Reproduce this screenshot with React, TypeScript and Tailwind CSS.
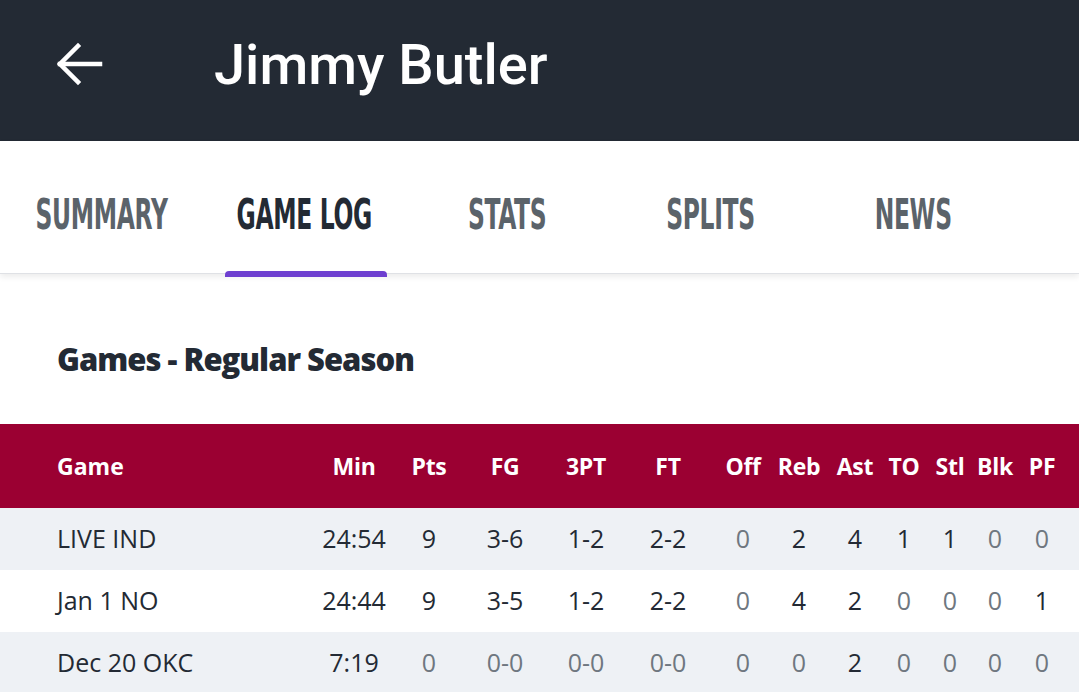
import React from 'react';

const tabs = ['SUMMARY', 'GAME LOG', 'STATS', 'SPLITS', 'NEWS'];
const cols = ['Min', 'Pts', 'FG', '3PT', 'FT', 'Off', 'Reb', 'Ast', 'TO', 'Stl', 'Blk', 'PF'];

const rows = [
  { game: 'LIVE IND', stats: ['24:54', '9', '3-6', '1-2', '2-2', '0', '2', '4', '1', '1', '0', '0'] },
  { game: 'Jan 1 NO', stats: ['24:44', '9', '3-5', '1-2', '2-2', '0', '4', '2', '0', '0', '0', '1'] },
  { game: 'Dec 20 OKC', stats: ['7:19', '0', '0-0', '0-0', '0-0', '0', '0', '2', '0', '0', '0', '0'] },
];

// zero values are drawn in a muted grey
const isZero = (v: string) => v === '0' || v === '0-0';

const grid =
  'grid grid-cols-[305px_98px_52px_100px_62px_102px_48px_64px_48px_50px_42px_48px_46px] items-center';

export default function App() {
  return (
    <div className="w-[1079px] h-[692px] overflow-hidden bg-white font-['Open_Sans',sans-serif]">
      <header className="h-[141px] bg-[#232a34] flex items-center">
        <div className="w-[214px] pl-[57px] flex items-center -mt-[14px]">
          <svg width="46" height="44" viewBox="0 0 46 44" fill="none" stroke="white" strokeWidth="4.5" strokeLinecap="square">
            <path d="M3 22H43" />
            <path d="M21 4L3 22L21 40" />
          </svg>
        </div>
        <h1 className="text-white text-[56px] font-medium font-['Roboto',sans-serif] leading-none -mt-[12px]">Jimmy Butler</h1>
      </header>

      <nav className="relative z-10 h-[133px] bg-white flex border-b border-[#dfe1e5] shadow-[0_3px_6px_rgba(0,0,0,0.08)]">
        {tabs.map((t, i) => (
          <div key={t} className="relative w-[203px] flex items-center justify-center pt-[14px]">
            <span
              className={`inline-block whitespace-nowrap scale-x-[0.62] text-[42px] font-bold font-['DejaVu_Sans_Condensed',sans-serif] tracking-[-0.5px] ${
                i === 1 ? 'text-[#232a34]' : 'text-[#5b636a]'
              }`}
            >
              {t}
            </span>
            {i === 1 && (
              <div className="absolute -bottom-[4px] left-[22px] w-[162px] h-[6px] rounded-t-[4px] bg-[#6e3fd0]" />
            )}
          </div>
        ))}
      </nav>

      <div className="h-[150px] flex items-center pl-[57px] pt-[20px]">
        <h2 className="text-[31px] font-extrabold text-[#232a34] tracking-[-1px]">Games - Regular Season</h2>
      </div>

      <div className={`${grid} h-[84px] bg-[#9b0032] text-white text-[23px] font-bold`}>
        <div className="pl-[57px]">Game</div>
        {cols.map((c) => (
          <div key={c} className="text-center tracking-[-0.3px]">{c}</div>
        ))}
      </div>

      {rows.map((r, ri) => (
        <div key={r.game} className={`${grid} h-[62px] text-[25px] ${ri % 2 === 0 ? 'bg-[#eef1f5]' : 'bg-white'}`}>
          <div className="pl-[57px] text-[#232a34]">{r.game}</div>
          {r.stats.map((v, i) => (
            <div key={i} className={`text-center ${isZero(v) ? 'text-[#6f7780]' : 'text-[#232a34]'}`}>
              {v}
            </div>
          ))}
        </div>
      ))}
    </div>
  );
}
